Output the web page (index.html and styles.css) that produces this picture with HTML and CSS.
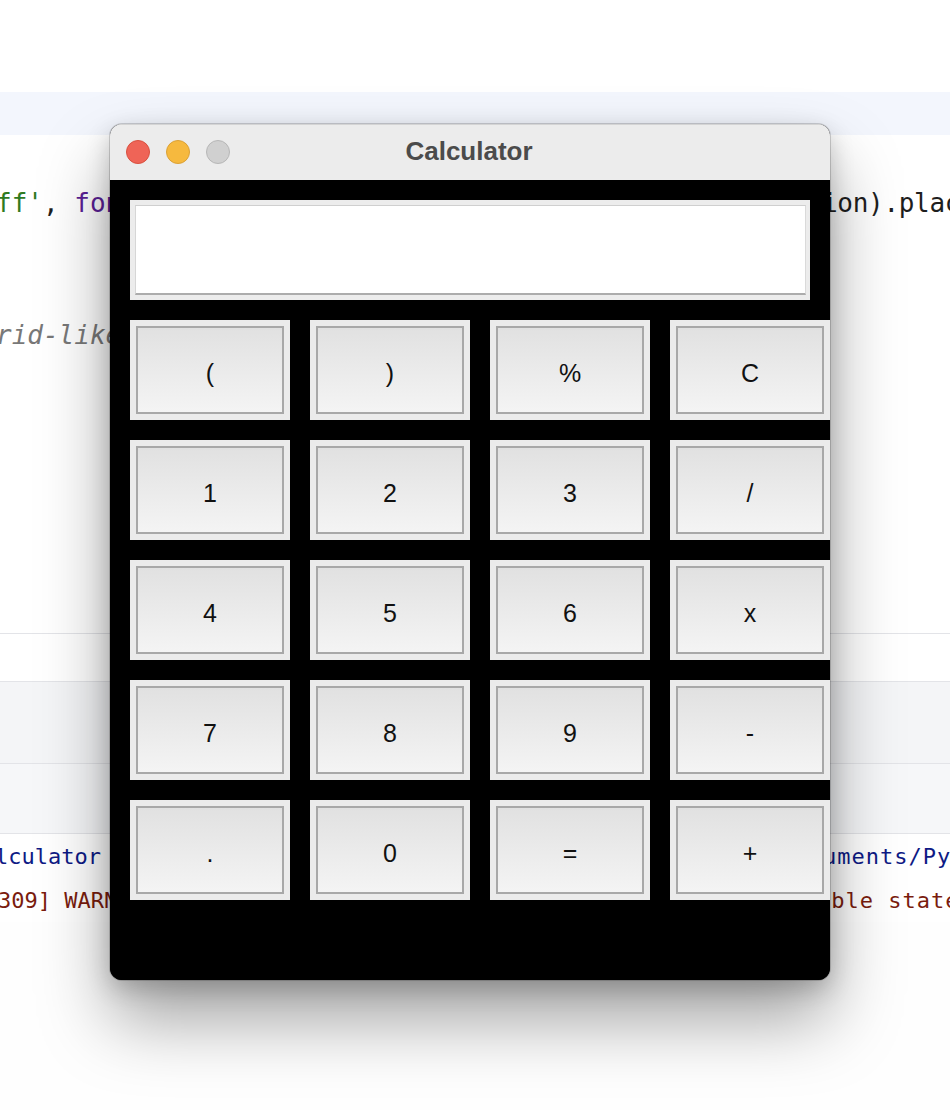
FILE: index.html
```html
<!DOCTYPE html>
<html lang="en">
<head>
<meta charset="utf-8">
<title>Calculator</title>
<link rel="stylesheet" href="styles.css">
</head>
<body>
<div class="page">
  <div class="top-space"></div>
  <div class="tab-band"></div>
  <div class="editor">
    <div class="code-line line-a">
      <span class="left"><span class="str">ff'</span>, <span class="kw">font</span>=(<span class="str">'Arial'</span>, 20), justify=<span class="str">'right'</span>, textvariable=express</span><span class="right">ion).place(x=0, y=0)</span>
    </div>
    <div class="code-line line-b">
      <span class="left comment">rid-like layout for the calculator buttons</span>
    </div>
  </div>
  <div class="panel panel-white"></div>
  <div class="panel panel-gray"></div>
  <div class="panel panel-gray2"></div>
  <div class="console">
    <div class="con-line con-a">
      <span class="left path">lculator /Users/dev/Doc</span><span class="right path">uments/PycharmProjects</span>
    </div>
    <div class="con-line con-b">
      <span class="left warn">309] WARNING: Secure coding is not enabled for restor</span><span class="right warn">able state</span>
    </div>
  </div>

  <div class="window">
    <div class="titlebar">
      <div class="lights">
        <span class="light red"></span>
        <span class="light yellow"></span>
        <span class="light gray"></span>
      </div>
      <div class="title">Calculator</div>
    </div>
    <div class="content">
      <div class="display"><div class="display-inner"></div></div>
      <div class="keys">
        <button class="key"><span class="face">(</span></button>
        <button class="key"><span class="face">)</span></button>
        <button class="key"><span class="face">%</span></button>
        <button class="key"><span class="face">C</span></button>
        <button class="key"><span class="face">1</span></button>
        <button class="key"><span class="face">2</span></button>
        <button class="key"><span class="face">3</span></button>
        <button class="key"><span class="face">/</span></button>
        <button class="key"><span class="face">4</span></button>
        <button class="key"><span class="face">5</span></button>
        <button class="key"><span class="face">6</span></button>
        <button class="key"><span class="face">x</span></button>
        <button class="key"><span class="face">7</span></button>
        <button class="key"><span class="face">8</span></button>
        <button class="key"><span class="face">9</span></button>
        <button class="key"><span class="face">-</span></button>
        <button class="key"><span class="face">.</span></button>
        <button class="key"><span class="face">0</span></button>
        <button class="key"><span class="face">=</span></button>
        <button class="key"><span class="face">+</span></button>
      </div>
    </div>
  </div>
</div>
</body>
</html>
```
FILE: styles.css
```css
* { box-sizing: border-box; }
html, body { margin: 0; padding: 0; background: #ffffff; }
.page {
  position: relative;
  width: 950px;
  height: 1110px;
  overflow: hidden;
  background: #fefefe;
  font-family: "DejaVu Sans Mono", "Liberation Mono", monospace;
}
.top-space { height: 92px; background: #ffffff; }
.tab-band { height: 43px; background: #f3f6fd; }
.editor { height: 498px; padding-top: 48px; background: #ffffff; }
.code-line {
  display: flex;
  height: 40px;
  align-items: center;
  font-size: 26px;
  white-space: pre;
  color: #1e1e1e;
}
.code-line .left { flex: 0 0 822px; overflow: hidden; text-indent: -4px; }
.code-line .right { flex: 0 0 auto; letter-spacing: -0.3px; }
.line-b { margin-top: 92px; }
.str { color: #2f7a1f; }
.kw { color: #5a1f95; }
.comment { color: #787878; font-style: italic; }
.panel { border-top: 1px solid #e3e4e8; }
.panel-white { height: 48px; background: #ffffff; }
.panel-gray { height: 82px; background: #f4f5f7; }
.panel-gray2 { height: 70px; background: #f6f7f9; }
.console { border-top: 1px solid #e3e4e8; background: #ffffff; }
.con-line {
  display: flex;
  height: 44px;
  align-items: center;
  font-size: 22px;
  white-space: pre;
}
.con-line .left { overflow: hidden; text-indent: -5px; }
.con-a .left { flex: 0 0 823px; }
.con-b .left { flex: 0 0 817px; text-indent: -2px; }
.con-line .right { flex: 0 0 auto; letter-spacing: 1px; }
.path { color: #0e1a85; }
.warn { color: #7a1c0e; }

/* Window */
.window {
  position: absolute;
  left: 110px;
  top: 124px;
  width: 720px;
  height: 856px;
  border-radius: 12px;
  overflow: hidden;
  background: #000000;
  box-shadow: 0 0 0 1px rgba(0,0,0,0.16), 0 40px 70px rgba(0,0,0,0.36), 0 8px 24px rgba(0,0,0,0.2);
  display: flex;
  flex-direction: column;
}
.titlebar {
  position: relative;
  height: 56px;
  flex: 0 0 56px;
  background: #ececec;
  border-top: 1px solid #d4d4d4;
  display: flex;
  align-items: center;
  justify-content: center;
}
.lights {
  position: absolute;
  left: 16px;
  top: 15px;
  display: flex;
  gap: 16px;
}
.light {
  width: 24px;
  height: 24px;
  border-radius: 50%;
  display: block;
}
.red { background: #ef6457; border: 1px solid #d9503f; }
.yellow { background: #f6b93e; border: 1px solid #dba136; }
.gray { background: #d0d0d0; border: 1px solid #b7b7b7; }
.title {
  font-family: "Liberation Sans", Arial, sans-serif;
  font-weight: bold;
  font-size: 26px;
  color: #4b4b4b;
  margin-left: -2px;
  margin-top: -2px;
}
.content {
  flex: 1;
  padding: 20px 0 0 20px;
  background: #000000;
}
.display {
  width: 680px;
  height: 100px;
  background: #ececec;
  padding: 5px 4px 5px 5px;
  margin-bottom: 20px;
}
.display-inner {
  width: 100%;
  height: 100%;
  background: #ffffff;
  border-top: 1px solid #cfcfcf;
  border-left: 1px solid #d6d6d6;
  border-right: 1px solid #dadada;
  border-bottom: 2px solid #acacac;
}
.keys {
  display: grid;
  grid-template-columns: repeat(4, 160px);
  grid-auto-rows: 100px;
  gap: 20px;
}
.key {
  margin: 0;
  padding: 6px;
  border: none;
  background: #ebebeb;
  width: 160px;
  height: 100px;
  display: flex;
  font: inherit;
}
.face {
  flex: 1;
  display: flex;
  align-items: center;
  justify-content: center;
  border: 2px solid #a8a8a8;
  background: linear-gradient(#e1e1e1, #f4f4f4);
  font-family: "Liberation Sans", Arial, sans-serif;
  font-size: 25px;
  color: #111111;
  padding-top: 6px;
}
```
